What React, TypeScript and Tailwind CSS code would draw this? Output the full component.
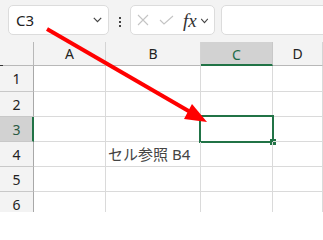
import React from "react";

const cols = ["A", "B", "C", "D"];
const rows = [1, 2, 3, 4, 5, 6];

function Chevron({ className }: { className?: string }) {
  return (
    <svg width="9" height="6" viewBox="0 0 9 6" className={className}>
      <path d="M0.8 0.8 L4.5 4.6 L8.2 0.8" fill="none" stroke="#444" strokeWidth="1.2" />
    </svg>
  );
}

function Toolbar() {
  return (
    <div className="flex h-[42px] items-start bg-[#f3f3f3] pl-[8px] pt-[5px]">
      {/* name box */}
      <div className="flex h-[30px] w-[101px] items-center justify-between rounded-[5px] border border-[#dcdcdc] bg-white pl-[7px] pr-[6px]">
        <span className="text-[15px] text-[#222]">C3</span>
        <Chevron />
      </div>
      {/* more */}
      <div className="ml-[10px] mt-[12px] flex flex-col gap-[2px]">
        <span className="size-[2px] bg-[#444]" />
        <span className="size-[2px] bg-[#444]" />
        <span className="size-[2px] bg-[#444]" />
      </div>
      {/* cancel / enter / fx */}
      <div className="ml-[9px] flex h-[30px] w-[85px] items-center rounded-[5px] border border-[#dcdcdc] bg-white pl-[6px]">
        <svg width="12" height="12" viewBox="0 0 12 12">
          <path d="M1 1 L11 11 M11 1 L1 11" stroke="#c4c4c4" strokeWidth="1.1" />
        </svg>
        <svg width="15" height="10" viewBox="0 0 15 10" className="ml-[10px]">
          <path d="M1 5 L5 9 L14 1" fill="none" stroke="#c4c4c4" strokeWidth="1.1" />
        </svg>
        <span className="ml-[9px] font-['Liberation_Serif',serif] text-[19px] italic leading-none text-[#333]">fx</span>
        <Chevron className="ml-[3px] mt-[2px] scale-x-90" />
      </div>
      {/* formula input */}
      <div className="-mr-3 ml-[6px] h-[30px] flex-1 rounded-[5px] border border-[#dcdcdc] bg-white" />
    </div>
  );
}

export default function App() {
  return (
    <div className="relative h-[212px] w-[323px] overflow-hidden bg-white font-['Noto_Sans','Noto_Sans_CJK_JP',sans-serif]">
      <Toolbar />
      <div className="grid grid-cols-[34px_72px_95px_72px_1fr] grid-rows-[24px_26px_25px_25px_25px_25px_25px] bg-white">
        {/* corner */}
        <div className="relative border-b border-r border-[#b8b8b8] bg-[#f3f3f3]">
          <span className="absolute bottom-[-1px] left-0 h-px w-[3px] bg-[#333]" />
        </div>
        {cols.map((c) => (
          <div
            key={c}
            className={
              c === "C"
                ? "flex items-center justify-center border-b-2 border-r border-b-[#217346] border-r-[#c8c8c8] bg-[#d2d2d2] pt-[2px] text-[14px] text-[#1d6b47]"
                : "flex items-center justify-center border-b border-r border-b-[#b8b8b8] border-r-[#d4d4d4] bg-[#f3f3f3] text-[14px] text-[#222]"
            }
          >
            {c}
          </div>
        ))}
        {rows.map((r) => (
          <React.Fragment key={r}>
            <div
              className={
                r === 3
                  ? "flex items-center justify-center border-b border-r-2 border-b-[#c8c8c8] border-r-[#217346] bg-[#d2d2d2] pl-[1px] text-[14px] text-[#2a5a43]"
                  : "flex items-center justify-center border-b border-r border-b-[#c8c8c8] border-r-[#a8a8a8] bg-[#f3f3f3] text-[14px] text-[#222]"
              }
            >
              {r}
            </div>
            {cols.map((c) => (
              <div key={c} className="relative flex items-center border-b border-r border-[#dadada]">
                {r === 4 && c === "B" && (
                  <span className="whitespace-nowrap pl-[2px] text-[15px] text-[#444]">セル参照 B4</span>
                )}
                {r === 3 && c === "C" && (
                  <>
                    <div className="absolute left-[-2px] top-[-2px] h-[28px] w-[75px] border-2 border-[#217346]" />
                    <div className="absolute left-[69px] top-[22px] size-[6px] bg-[#217346]" />
                  </>
                )}
              </div>
            ))}
          </React.Fragment>
        ))}
      </div>
      {/* annotation arrow */}
      <svg className="pointer-events-none absolute inset-0" width="323" height="212" viewBox="0 0 323 212">
        <line x1="47" y1="29" x2="192" y2="113" stroke="#ff0000" strokeWidth="4" />
        <polygon points="207,122 192,104 184,119" fill="#ff0000" />
      </svg>
    </div>
  );
}
